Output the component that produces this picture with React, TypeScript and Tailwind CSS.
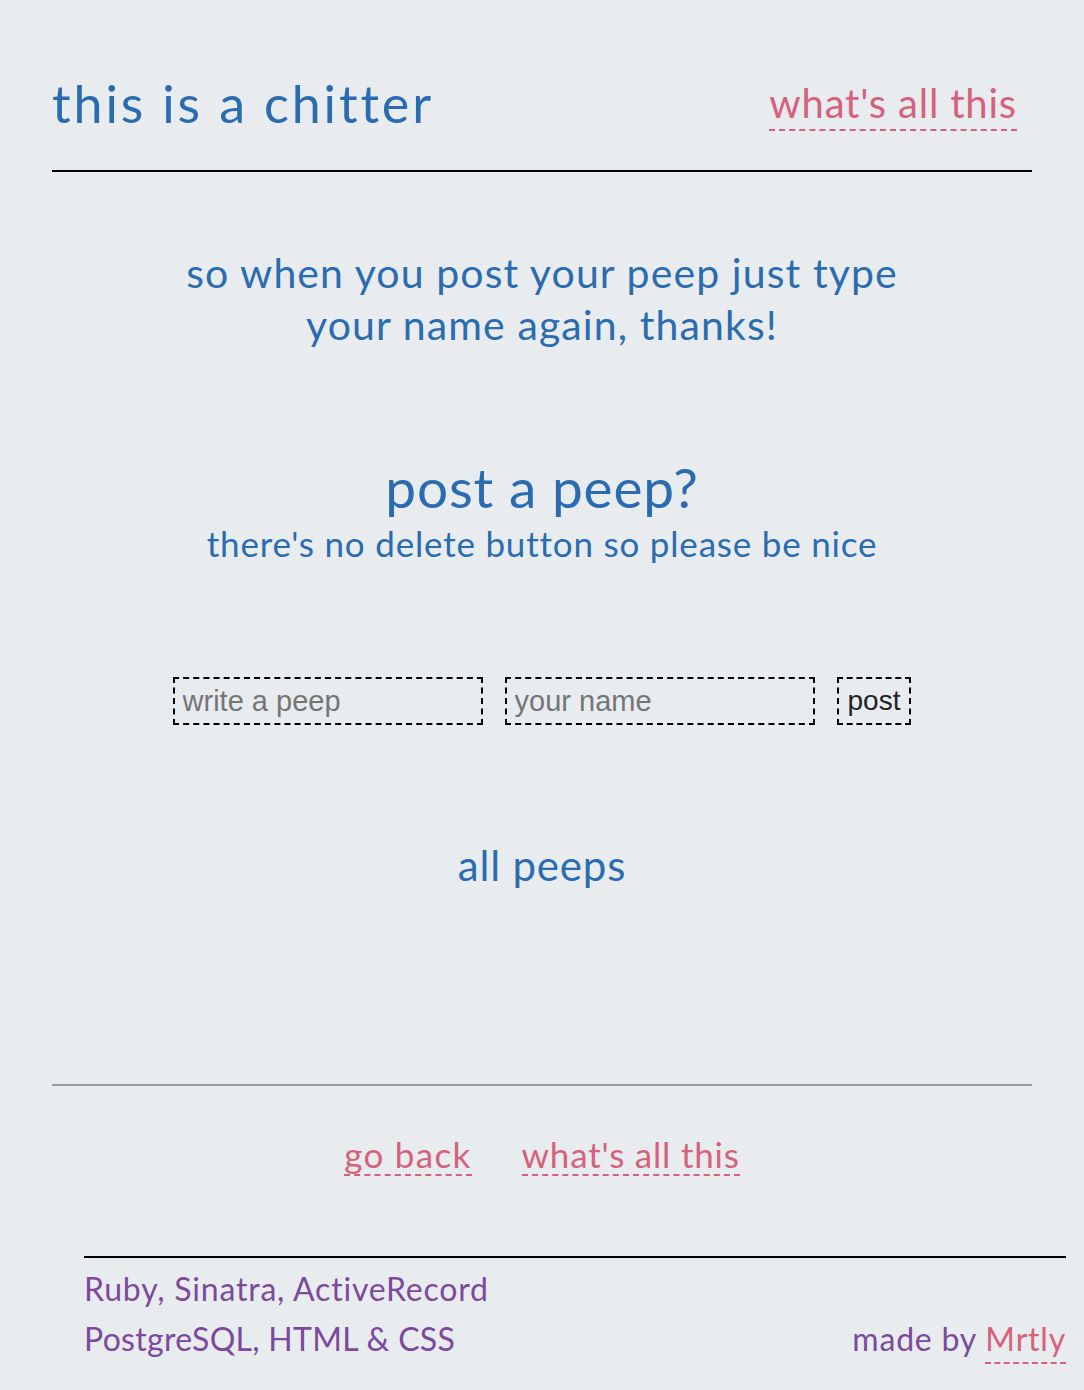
import React from 'react';

const font = { fontFamily: 'Lato, "Noto Sans", sans-serif' };
const inputFont = { fontFamily: '"Liberation Sans", Arial, sans-serif' };

function DashLink({ children, className = '' }: { children: React.ReactNode; className?: string }) {
  return (
    <a href="#" className={`text-[#d4627d] border-b-2 border-dashed border-[#d4627d] leading-none ${className}`}>
      {children}
    </a>
  );
}

export default function App() {
  return (
    <div className="min-h-[1390px] bg-[#e8ecef] overflow-hidden tracking-[0.8px]" style={font}>
      <div className="px-[52px]">
        <header className="flex items-end justify-between pt-[77px] pb-[41px] border-b-2 border-black">
          <h1 className="text-[52px] leading-none text-[#2b6cb0] tracking-[2.86px]">this is a chitter</h1>
          <DashLink className="text-[40px] pb-[6px] mr-[15px] mb-[-2px]">what's all this</DashLink>
        </header>

        <p className="mt-[75px] text-center text-[41px] leading-[52px] text-[#2b6cb0] tracking-[1.1px]">
          so when you post your peep just type
          <br />
          your name again, thanks!
        </p>

        <section className="mt-[104px] text-center text-[#2b6cb0]">
          <h2 className="text-[55px] leading-[64px]">post a peep?</h2>
          <p className="text-[35px] leading-[48px]">there's no delete button so please be nice</p>
        </section>

        <form className="mt-[110px] flex justify-center gap-[22px] tracking-normal" onSubmit={(e) => e.preventDefault()}>
          <input
            placeholder="write a peep"
            className="w-[310px] h-[48px] px-[8px] bg-transparent border-2 border-dashed border-black text-[29px] placeholder:text-[#757575] outline-none"
            style={inputFont}
          />
          <input
            placeholder="your name"
            className="w-[310px] h-[48px] px-[8px] bg-transparent border-2 border-dashed border-black text-[29px] placeholder:text-[#757575] outline-none"
            style={inputFont}
          />
          <button
            type="submit"
            className="h-[48px] px-[9px] border-2 border-dashed border-black text-[28px] text-[#222]"
            style={inputFont}
          >
            post
          </button>
        </form>

        <h3 className="mt-[109px] text-center text-[42px] text-[#2b6cb0]">all peeps</h3>

        <div className="mt-[187px] border-t-2 border-[#9a9a9a]" />

        <nav className="mt-[51px] flex justify-center gap-[50px] text-[35px]">
          <DashLink className="pb-[2px] tracking-[1.3px]">go back</DashLink>
          <DashLink className="pb-[2px]">what's all this</DashLink>
        </nav>
      </div>

      <footer className="mt-[80px] ml-[84px] mr-[18px] border-t-2 border-black pt-[6px] text-[32px] text-[#7c4a9c]">
        <p className="leading-[50px]">Ruby, Sinatra, ActiveRecord</p>
        <div className="flex justify-between items-end">
          <p className="leading-[50px] tracking-[0.3px]">PostgreSQL, HTML &amp; CSS</p>
          <p className="leading-[50px]">
            made by <DashLink className="pb-[4px]">Mrtly</DashLink>
          </p>
        </div>
      </footer>
    </div>
  );
}
